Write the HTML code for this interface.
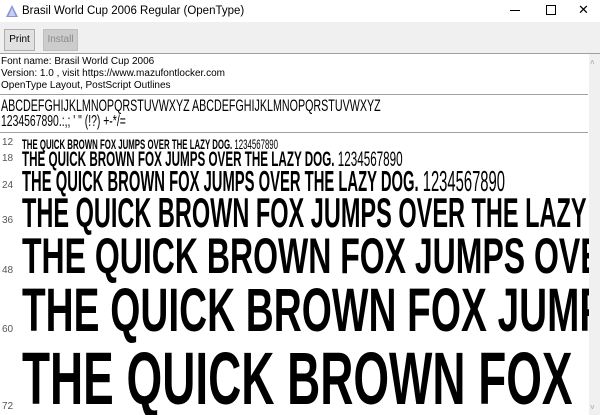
<!DOCTYPE html>
<html><head><style>
body{margin:0;width:600px;height:415px;overflow:hidden;background:#fff;font-family:"Liberation Sans",sans-serif;position:relative}
.a{position:absolute;white-space:nowrap}
.s{font-weight:bold;line-height:1;transform-origin:0 0;left:22px;color:#000}
.n{font-size:10px;color:#555;left:2px}
.d{font-weight:normal}
</style></head><body>
<div class="a" style="left:0;top:0;width:600px;height:22px;background:#fff"></div>
<svg class="a" style="left:6px;top:5px" width="12" height="12" viewBox="0 0 12 12"><path d="M6 0L0 12h12z" fill="#8a94d8"/><path d="M6 3L2.5 11h7z" fill="#c9cdf0"/></svg>
<div class="a" style="left:22px;top:5px;font-size:11.5px;color:#000">Brasil World Cup 2006 Regular (OpenType)</div>
<div class="a" style="left:510px;top:10px;width:10px;height:1px;background:#000"></div>
<div class="a" style="left:546px;top:5px;width:8px;height:8px;border:1px solid #000"></div>
<div class="a" style="left:578px;top:2px;font-size:13px;color:#000">✕</div>
<div class="a" style="left:0;top:22px;width:600px;height:31px;background:#f0f0f0"></div>
<div class="a" style="left:0;top:53px;width:600px;height:1px;background:#a0a0a0"></div>
<div class="a" style="left:4px;top:29px;width:29px;height:20px;background:#e1e1e1;border:1px solid #adadad;font-size:10px;text-align:center;line-height:20px;color:#000">Print</div>
<div class="a" style="left:43px;top:29px;width:33px;height:20px;background:#cccccc;border:1px solid #bfbfbf;font-size:10px;text-align:center;line-height:20px;color:#8a8a8a">Install</div>
<div class="a" style="left:589px;top:54px;width:11px;height:361px;background:#f0f0f0"></div>
<div class="a" style="left:590px;top:58px;font-size:8px;color:#a0a0a0">˄</div>
<div class="a" style="left:590px;top:403px;font-size:8px;color:#a0a0a0">˅</div>
<div class="a" style="left:1px;top:56px;font-size:10px;line-height:12px;color:#000">Font name: Brasil World Cup 2006<br>Version: 1.0 , visit https://www.mazufontlocker.com<br>OpenType Layout, PostScript Outlines</div>
<div class="a" style="left:0;top:94px;width:588px;height:1px;background:#a0a0a0"></div>
<div class="a s" style="left:1px;top:97px;font-size:17px;font-weight:normal;transform:scaleX(0.63)">ABCDEFGHIJKLMNOPQRSTUVWXYZ ABCDEFGHIJKLMNOPQRSTUVWXYZ</div>
<div class="a s" style="left:1px;top:114px;font-size:16px;font-weight:normal;transform:scaleX(0.65)">1234567890.:,; ' " (!?) +-*/=</div>
<div class="a" style="left:0;top:132px;width:588px;height:1px;background:#a0a0a0"></div>
<div class="a n" style="top:137px">12</div>
<div class="a s" style="top:137px;font-size:14px;transform:scaleX(0.56)">THE QUICK BROWN FOX JUMPS OVER THE LAZY DOG. <span class="d">1234567890</span></div>
<div class="a n" style="top:153px">18</div>
<div class="a s" style="top:149px;font-size:21px;transform:scaleX(0.555)">THE QUICK BROWN FOX JUMPS OVER THE LAZY DOG. <span class="d">1234567890</span></div>
<div class="a n" style="top:180px">24</div>
<div class="a s" style="top:168px;font-size:29px;transform:scaleX(0.51)">THE QUICK BROWN FOX JUMPS OVER THE LAZY DOG. <span class="d">1234567890</span></div>
<div class="a n" style="top:215px">36</div>
<div class="a" style="left:0;top:185px;width:589px;height:230px;overflow:hidden">
<div class="a s" style="top:7px;font-size:42px;transform:scaleX(0.56)">THE QUICK BROWN FOX JUMPS OVER THE LAZY DOG.</div>
<div class="a s" style="top:46px;font-size:50px;transform:scaleX(0.64)">THE QUICK BROWN FOX JUMPS OVER THE LAZY DOG.</div>
<div class="a s" style="top:95px;font-size:61px;transform:scaleX(0.635)">THE QUICK BROWN FOX JUMPS OVER THE LAZY DOG.</div>
<div class="a s" style="top:157px;font-size:74px;transform:scaleX(0.62)">THE QUICK BROWN FOX</div>
</div>
<div class="a n" style="top:265px">48</div>
<div class="a n" style="top:324px">60</div>
<div class="a n" style="top:401px">72</div>
</body></html>
